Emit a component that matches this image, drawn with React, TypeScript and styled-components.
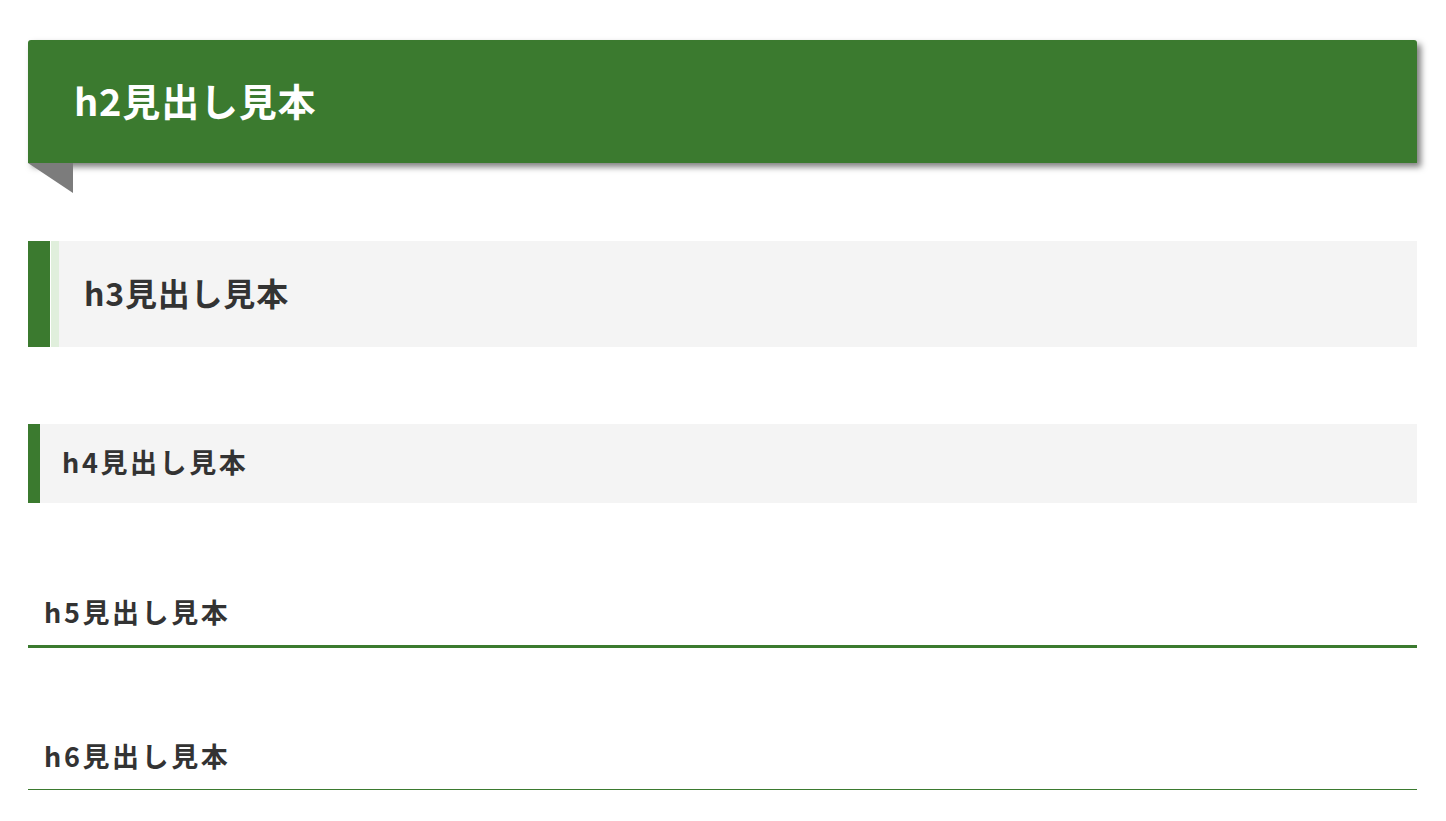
import React from 'react';
import styled, { createGlobalStyle } from 'styled-components';

const GlobalStyle = createGlobalStyle`
  html, body {
    margin: 0;
    padding: 0;
    background: #fff;
  }
  body {
    font-family: "Noto Sans CJK JP", "Noto Sans", sans-serif;
    color: #333;
  }
`;

const green = '#3b7a2f';

const Article = styled.main`
  display: flex;
  flex-direction: column;
  padding: 40px 29px 40px 28px;
`;

const H2 = styled.h2`
  position: relative;
  margin: 0;
  padding: 33px 46px 37px;
  background: ${green};
  color: #fff;
  font-size: 38px;
  font-weight: 700;
  line-height: 53px;
  letter-spacing: 0.8px;
  border-radius: 3px 3px 0 0;
  box-shadow: 4px 4px 6px rgba(0, 0, 0, 0.5);

  &::after {
    content: '';
    position: absolute;
    left: 0;
    bottom: -30px;
    border-top: 30px solid #7c7c7c;
    border-left: 45px solid transparent;
  }
`;

const H3 = styled.h3`
  margin: 78px 0 0;
  padding: 30px 34px 34px;
  background: #f4f4f4;
  border-left: 22px solid ${green};
  box-shadow: inset 1px 0 0 #fff, inset 9px 0 0 #e0efdc;
  font-size: 32px;
  font-weight: 700;
  line-height: 42px;
  letter-spacing: 0.8px;
`;

const H4 = styled.h4`
  margin: 77px 0 0;
  padding: 19px 22px 23px;
  background: #f4f4f4;
  border-left: 12px solid ${green};
  font-size: 27px;
  font-weight: 700;
  line-height: 37px;
  letter-spacing: 2.6px;
`;

const LinedHeading = styled.h5<{ $weight: number; $top: number }>`
  margin: ${p => p.$top}px 0 0;
  padding: 0 16px 15px;
  border-bottom: ${p => p.$weight}px solid ${green};
  font-size: 27px;
  font-weight: 700;
  line-height: 37px;
  letter-spacing: 2.6px;
`;

export default function App() {
  return (
    <>
      <GlobalStyle />
      <Article>
        <H2>h2見出し見本</H2>
        <H3>h3見出し見本</H3>
        <H4>h4見出し見本</H4>
        <LinedHeading as="h5" $weight={3} $top={90}>h5見出し見本</LinedHeading>
        <LinedHeading as="h6" $weight={1} $top={89}>h6見出し見本</LinedHeading>
      </Article>
    </>
  );
}
